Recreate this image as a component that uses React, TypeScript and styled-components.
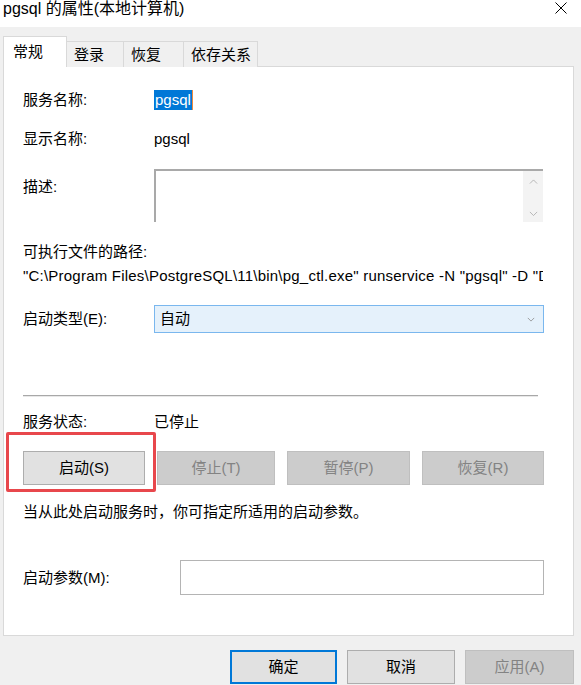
import React from 'react'
import styled, { createGlobalStyle } from 'styled-components'

const Global = createGlobalStyle`
  html, body {
    margin: 0;
    padding: 0;
    background: #f0f0f0;
  }
  body {
    font-family: "Liberation Sans", "Noto Sans CJK SC", sans-serif;
    font-size: 15px;
    color: #000;
  }
`

const Dialog = styled.div`
  width: 581px;
  height: 685px;
  overflow: hidden;
  background: #f0f0f0;
  display: flex;
  flex-direction: column;
`

const TitleBar = styled.div`
  height: 27px;
  background: #fff;
  display: flex;
  align-items: center;
  justify-content: space-between;
  padding: 0 14px 0 3px;
  flex-shrink: 0;
`
const Title = styled.div`
  font-size: 16px;
  line-height: 18px;
  margin-top: -10px;
`
const CloseBtn = styled.div`
  width: 12px;
  height: 12px;
  margin-top: -12px;
  display: flex;
`

const TabStrip = styled.div`
  display: flex;
  align-items: flex-end;
  height: 30px;
  margin-top: 10px;
  padding-left: 3px;
  flex-shrink: 0;
`
const Tab = styled.div<{ $active?: boolean; $w: number }>`
  width: ${p => p.$w}px;
  height: ${p => (p.$active ? 31 : 26)}px;
  padding-left: ${p => (p.$active ? 9 : 7)}px;
  padding-top: ${p => (p.$active ? 5 : 0)}px;
  box-sizing: border-box;
  display: flex;
  align-items: ${p => (p.$active ? 'flex-start' : 'center')};
  background: ${p => (p.$active ? '#fff' : '#f0f0f0')};
  border: 1px solid #d9d9d9;
  border-bottom: none;
  margin-left: ${p => (p.$active ? 0 : -1)}px;
  position: relative;
  z-index: ${p => (p.$active ? 2 : 1)};
  line-height: 20px;
`

const Panel = styled.div`
  margin: -1px 7px 0 3px;
  height: 570px;
  background: #fff;
  border: 1px solid #d9d9d9;
  box-sizing: border-box;
  padding: 23px 0 0 19px;
  display: flex;
  flex-direction: column;
  flex-shrink: 0;
`

const Row = styled.div<{ $gap?: number; $h?: number; $top?: boolean }>`
  display: flex;
  align-items: ${p => (p.$top ? 'flex-start' : 'center')};
  margin-top: ${p => p.$gap ?? 0}px;
  min-height: ${p => p.$h ?? 20}px;
  line-height: 20px;
`
const Label = styled.div<{ $w?: number; $pt?: number }>`
  width: ${p => p.$w ?? 131}px;
  flex-shrink: 0;
  padding-top: ${p => p.$pt ?? 0}px;
  white-space: nowrap;
`
const Selected = styled.span`
  background: #0078d7;
  color: #fff;
  padding: 0 1px;
  border-right: 1px solid #f08a3c;
`

const DescBox = styled.div`
  width: 389px;
  height: 53px;
  box-sizing: border-box;
  border-top: 2px solid #a9a9a9;
  border-left: 2px solid #a9a9a9;
  display: flex;
  justify-content: flex-end;
`
const ScrollBar = styled.div`
  width: 20px;
  background: #f3f3f3;
  display: flex;
  flex-direction: column;
  justify-content: space-between;
  align-items: center;
  padding: 8px 0 6px;
`

const PathText = styled.div`
  width: 520px;
  overflow: hidden;
  white-space: nowrap;
  letter-spacing: 0.22px;
`

const Select = styled.div`
  width: 390px;
  height: 28px;
  box-sizing: border-box;
  background: #e5f1fb;
  border: 1px solid #7ab7ee;
  display: flex;
  align-items: center;
  justify-content: space-between;
  padding: 0 8px 0 5px;
`

const Separator = styled.div`
  height: 2px;
  width: 515px;
  background: #a8a8a8;
  border-bottom: 1px solid #e8e8e8;
  box-sizing: border-box;
  margin-top: 62px;
`

const ButtonRow = styled.div`
  display: grid;
  grid-template-columns: 122px 118px 123px 122px;
  column-gap: 12px;
  margin-top: 19px;
  position: relative;
`
const Btn = styled.div<{ $disabled?: boolean; $default?: boolean; $w?: number }>`
  height: 34px;
  ${p => (p.$w ? `width: ${p.$w}px;` : '')}
  box-sizing: border-box;
  display: flex;
  align-items: center;
  justify-content: center;
  background: ${p => (p.$disabled ? '#cccccc' : '#e1e1e1')};
  border: ${p => (p.$default ? '2px solid #0078d7' : p.$disabled ? '1px solid #bfbfbf' : '1px solid #adadad')};
  color: ${p => (p.$disabled ? '#838383' : '#000')};
  line-height: 20px;
`
const Highlight = styled.div`
  position: absolute;
  left: -17px;
  top: -19px;
  width: 150px;
  height: 60px;
  box-sizing: border-box;
  border: 3px solid #e8474c;
  border-radius: 2px;
  pointer-events: none;
`

const ParamBox = styled.div`
  width: 364px;
  height: 35px;
  box-sizing: border-box;
  border: 1px solid #b4b4b4;
`

const Footer = styled.div`
  display: flex;
  justify-content: flex-end;
  gap: 10px;
  padding: 14px 7px 0 0;
`

const Chevron = ({ dir, color = '#a0a0a0', size = 10 }: { dir: 'up' | 'down'; color?: string; size?: number }) => (
  <svg width={size} height={size / 2 + 1} viewBox="0 0 10 6">
    <path d={dir === 'up' ? 'M1 5 L5 1 L9 5' : 'M1 1 L5 5 L9 1'} fill="none" stroke={color} strokeWidth="1" />
  </svg>
)

export default function App() {
  return (
    <Dialog>
      <Global />
      <TitleBar>
        <Title>pgsql 的属性(本地计算机)</Title>
        <CloseBtn>
          <svg width="12" height="12" viewBox="0 0 12 12">
            <path d="M0.5 0.5 L11.5 11.5 M11.5 0.5 L0.5 11.5" stroke="#000" strokeWidth="1" />
          </svg>
        </CloseBtn>
      </TitleBar>
      <TabStrip>
        <Tab $active $w={64}>常规</Tab>
        <Tab $w={58}>登录</Tab>
        <Tab $w={61}>恢复</Tab>
        <Tab $w={75}>依存关系</Tab>
      </TabStrip>
      <Panel>
        <Row>
          <Label>服务名称:</Label>
          <Selected>pgsql</Selected>
        </Row>
        <Row $gap={19}>
          <Label>显示名称:</Label>
          <span>pgsql</span>
        </Row>
        <Row $gap={20} $top>
          <Label $pt={8}>描述:</Label>
          <DescBox>
            <ScrollBar>
              <Chevron dir="up" size={9} color="#b0b0b0" />
              <Chevron dir="down" size={9} color="#b0b0b0" />
            </ScrollBar>
          </DescBox>
        </Row>
        <Row $gap={20}>
          <Label>可执行文件的路径:</Label>
        </Row>
        <Row $gap={4}>
          <PathText>"C:\Program Files\PostgreSQL\11\bin\pg_ctl.exe" runservice -N "pgsql" -D "D:\PostgreSQL\data"</PathText>
        </Row>
        <Row $gap={19} $h={28}>
          <Label>启动类型(E):</Label>
          <Select>
            <span>自动</span>
            <Chevron dir="down" size={8} color="#8a8a8a" />
          </Select>
        </Row>
        <Separator />
        <Row $gap={15}>
          <Label>服务状态:</Label>
          <span>已停止</span>
        </Row>
        <ButtonRow>
          <Btn>启动(S)</Btn>
          <Btn $disabled>停止(T)</Btn>
          <Btn $disabled>暂停(P)</Btn>
          <Btn $disabled>恢复(R)</Btn>
          <Highlight />
        </ButtonRow>
        <Row $gap={17}>当从此处启动服务时，你可指定所适用的启动参数。</Row>
        <Row $gap={38} $h={35}>
          <Label $w={157}>启动参数(M):</Label>
          <ParamBox />
        </Row>
      </Panel>
      <Footer>
        <Btn $default $w={107}>确定</Btn>
        <Btn $w={108}>取消</Btn>
        <Btn $disabled $w={109}>应用(A)</Btn>
      </Footer>
    </Dialog>
  )
}
